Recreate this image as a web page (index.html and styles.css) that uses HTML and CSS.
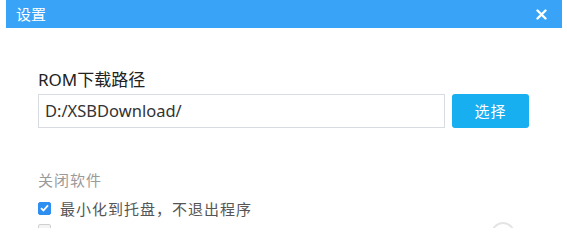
FILE: index.html
```html
<!DOCTYPE html>
<html lang="zh-CN">
<head>
<meta charset="utf-8">
<title>设置</title>
<link rel="stylesheet" href="styles.css">
</head>
<body>
<div class="window">
  <div class="titlebar">
    <span class="title">设置</span>
    <svg class="close" width="11" height="11" viewBox="0 0 11 11"><path d="M1.5 1.5 L9.5 9.5 M9.5 1.5 L1.5 9.5" stroke="#fff" stroke-width="2.4" stroke-linecap="round"/></svg>
  </div>
  <div class="content">
    <div class="label">ROM下载路径</div>
    <div class="path-row">
      <div class="path-input">D:/XSBDownload/</div>
      <div class="btn">选择</div>
    </div>
    <div class="section-title">关闭软件</div>
    <div class="check-row">
      <span class="checkbox checked"><svg width="9" height="8" viewBox="0 0 9 8"><path d="M1 4.2 L3.4 6.5 L8 1.3" fill="none" stroke="#fff" stroke-width="1.8"/></svg></span>
      <span class="check-text">最小化到托盘，不退出程序</span>
    </div>
    <div class="check-row second">
      <span class="checkbox"></span>
      <span class="ring"></span>
    </div>
  </div>
</div>
</body>
</html>
```
FILE: styles.css
```css
html, body {
  margin: 0;
  padding: 0;
  background: #fff;
}
body {
  font-family: "Noto Sans", "Noto Sans CJK SC", sans-serif;
}
.window {
  margin: 0 5px 0 6px;
  height: 228px;
  overflow: hidden;
}
.titlebar {
  height: 28px;
  background: #38a3f7;
  display: flex;
  align-items: center;
  justify-content: space-between;
  padding: 0 15px 0 10px;
}
.title {
  color: #fff;
  font-size: 15px;
  line-height: 20px;
  font-family: "Noto Sans CJK SC", sans-serif;
}
.close {
  display: block;
}
.content {
  padding-left: 32px;
}
.label {
  margin-top: 40px;
  font-size: 17px;
  line-height: 24px;
  color: #222;
}
.path-row {
  display: flex;
  margin-top: 2px;
}
.path-input {
  width: 399px;
  height: 32px;
  border: 1px solid #d8dce2;
  padding-left: 6px;
  font-size: 16.5px;
  line-height: 32px;
  color: #333;
}
.btn {
  width: 77px;
  height: 34px;
  margin-left: 7px;
  background: #17aff0;
  border-radius: 3px;
  color: #fff;
  font-size: 15px;
  line-height: 34px;
  text-align: center;
  font-family: "Noto Sans CJK SC", sans-serif;
  letter-spacing: 1px;
}
.section-title {
  margin-top: 42px;
  font-size: 15px;
  line-height: 20px;
  color: #9a9a9a;
  letter-spacing: 1px;
  font-family: "Noto Sans CJK SC", sans-serif;
}
.check-row {
  display: flex;
  align-items: center;
  margin-top: 8px;
  height: 20px;
}
.check-row.second {
  margin-top: 6px;
  align-items: flex-start;
}
.checkbox {
  width: 13px;
  height: 13px;
  box-sizing: border-box;
  border: 1px solid #d0d0d0;
  border-radius: 2px;
  display: flex;
  align-items: center;
  justify-content: center;
  background: #f4f4f4;
}
.checkbox.checked {
  background: #2f8ff0;
  border-color: #2f8ff0;
}
.check-text {
  margin-left: 9px;
  font-size: 15px;
  color: #555;
  letter-spacing: 1px;
  font-family: "Noto Sans CJK SC", sans-serif;
}
.ring {
  margin-left: auto;
  margin-right: 47px;
  margin-top: -2px;
  width: 20px;
  height: 20px;
  border-radius: 50%;
  border: 2px solid #e4e4e4;
}
```
